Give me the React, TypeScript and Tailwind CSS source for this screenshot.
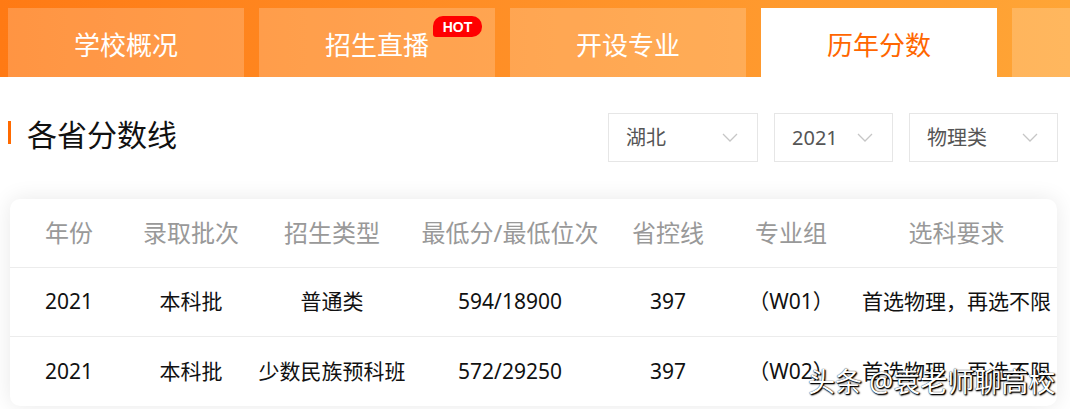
const tabs = [
  { title: "学校概况" },
  { title: "招生直播", hot: true },
  { title: "开设专业" },
  { title: "历年分数", active: true },
  { title: "" },
];

const filters = [
  { label: "湖北", width: "w-[150px]" },
  { label: "2021", width: "w-[119px]" },
  { label: "物理类", width: "w-[149px]" },
];

const columns = ["年份", "录取批次", "招生类型", "最低分/最低位次", "省控线", "专业组", "选科要求"];

const rows = [
  ["2021", "本科批", "普通类", "594/18900", "397", "（W01）", "首选物理，再选不限"],
  ["2021", "本科批", "少数民族预科班", "572/29250", "397", "（W02）", "首选物理，再选不限"],
];

const grid = "grid grid-cols-[118px_126px_156px_200px_116px_130px_201px]";

function Chevron() {
  return (
    <svg width="16" height="9" viewBox="0 0 16 9" fill="none">
      <polyline points="1,1 8,8 15,1" stroke="#c6c6c6" strokeWidth="1.3" />
    </svg>
  );
}

export default function App() {
  return (
    <div className="relative w-[1070px] h-[409px] overflow-hidden bg-white font-['Noto_Sans','Noto_Sans_CJK_SC',sans-serif]">
      {/* tabs */}
      <div className="flex gap-[15px] h-[77px] pt-2 pl-2 bg-gradient-to-r from-[#ff7a14] to-[#ffa536]">
        {tabs.map((tab, i) => (
          <div
            key={i}
            className={
              "relative shrink-0 w-[236px] h-[69px] flex items-center justify-center pt-[6px] text-[26px] " +
              (tab.active ? "bg-white text-[#ff6600]" : "bg-white/20 text-white")
            }
          >
            {tab.title}
            {tab.hot && (
              <span className="absolute top-[8px] right-[13px] w-[49px] h-[21px] flex items-center justify-center rounded-[10px] rounded-bl-[3px] bg-[#ff0000] text-white text-[14px] font-bold leading-none font-['Liberation_Sans',sans-serif]">
                HOT
              </span>
            )}
          </div>
        ))}
      </div>

      {/* heading + filters */}
      <div className="flex items-center justify-between mt-[36px] h-[49px] pl-2 pr-[12px]">
        <div className="flex items-center gap-4 pb-[6px]">
          <span className="w-[3px] h-[23px] bg-[#ff6a00] mb-[4px]" />
          <span className="text-[30px] leading-none text-[#111]">各省分数线</span>
        </div>
        <div className="flex gap-4">
          {filters.map((f) => (
            <div
              key={f.label}
              className={f.width + " h-[49px] flex items-center justify-between pl-[17px] pr-[19px] border border-[#e6e6e6] text-[20px] text-[#555]"}
            >
              <span>{f.label}</span>
              <Chevron />
            </div>
          ))}
        </div>
      </div>

      {/* table */}
      <div className="mt-[37px] ml-[10px] w-[1047px] rounded-[10px] bg-white shadow-[0_0_22px_rgba(0,0,0,0.09)] overflow-hidden">
        <div className={grid + " h-[69px] items-center border-b border-[#ececec] text-[24px] text-[#999]"}>
          {columns.map((c) => (
            <div key={c} className="text-center whitespace-nowrap">
              {c}
            </div>
          ))}
        </div>
        {rows.map((r, i) => (
          <div
            key={i}
            className={grid + " h-[69px] items-center text-[21px] text-[#111] " + (i === 0 ? "border-b border-[#ececec]" : "")}
          >
            {r.map((cell, j) => (
              <div key={j} className="text-center whitespace-nowrap">
                {cell}
              </div>
            ))}
          </div>
        ))}
      </div>

      {/* watermark */}
      <div className="absolute left-[808px] top-[362px] text-[27px] text-white whitespace-nowrap [text-shadow:0_0_1px_#000,1px_1px_1px_#000,1px_1px_2px_#000]">
        头条 @袁老师聊高校
      </div>
    </div>
  );
}
